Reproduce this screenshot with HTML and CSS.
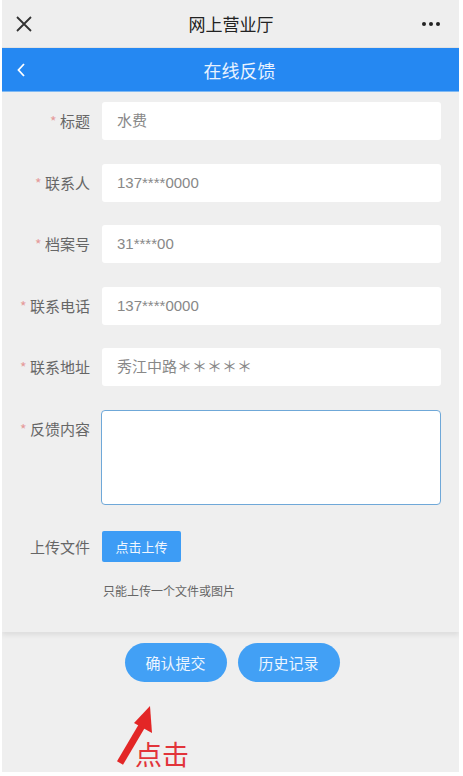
FILE: index.html
```html
<!DOCTYPE html>
<html lang="zh-CN">
<head>
    <meta charset="UTF-8">
    <meta name="viewport" content="width=device-width, initial-scale=1.0">
    <title>在线反馈</title>
    <link rel="stylesheet" href="styles.css">
</head>
<body>

<div class="phone">
    <div class="top-bar">
        <svg class="close-icon" width="18" height="18" viewBox="0 0 18 18">
            <path d="M2 2 L16 16 M16 2 L2 16" stroke="#333" stroke-width="1.8" fill="none"/>
        </svg>
        <span class="top-title">网上营业厅</span>
        <svg class="more-icon" width="20" height="6" viewBox="0 0 20 6">
            <circle cx="3" cy="3" r="2" fill="#222"/>
            <circle cx="10" cy="3" r="2" fill="#222"/>
            <circle cx="17" cy="3" r="2" fill="#222"/>
        </svg>
    </div>

    <div class="nav-bar">
        <svg class="back-icon" width="10" height="16" viewBox="0 0 10 16">
            <path d="M8 2 L2.5 8 L8 14" stroke="#fff" stroke-width="1.8" fill="none"/>
        </svg>
        <span class="nav-title">在线反馈</span>
    </div>

    <form class="feedback-form">
        <div class="form-row">
            <label><span class="star">*</span> 标题</label>
            <div class="field">水费</div>
        </div>
        <div class="form-row">
            <label><span class="star">*</span> 联系人</label>
            <div class="field">137****0000</div>
        </div>
        <div class="form-row">
            <label><span class="star">*</span> 档案号</label>
            <div class="field">31****00</div>
        </div>
        <div class="form-row">
            <label><span class="star">*</span> 联系电话</label>
            <div class="field">137****0000</div>
        </div>
        <div class="form-row">
            <label><span class="star">*</span> 联系地址</label>
            <div class="field">秀江中路＊＊＊＊＊</div>
        </div>
        <div class="form-row">
            <label><span class="star">*</span> 反馈内容</label>
            <div class="field field-area"></div>
        </div>
        <div class="form-row upload-row">
            <label>上传文件</label>
            <div class="upload-btn">点击上传</div>
        </div>
        <div class="hint">只能上传一个文件或图片</div>
    </form>

    <div class="actions">
        <div class="pill-btn">确认提交</div>
        <div class="pill-btn">历史记录</div>
    </div>

    <div class="callout">
        <svg class="arrow" width="44" height="62" viewBox="0 0 44 62">
            <path d="M6 58 L29 19" stroke="#e32626" stroke-width="7" fill="none"/>
            <polygon points="36,1 38,28 20,18" fill="#e32626"/>
        </svg>
        <span class="callout-text">点击</span>
    </div>
</div>

</body>
</html>
```

FILE: styles.css
```css
body {
    margin: 0;
    background: #fff;
    font-family: "Noto Sans CJK SC", "Noto Sans", sans-serif;
}
.phone {
    width: 457px;
    height: 772px;
    margin-left: 2px;
    background: #efefef;
    overflow: hidden;
}
.top-bar {
    height: 47px;
    display: flex;
    align-items: center;
    justify-content: space-between;
    padding: 0 18px 0 13px;
    background: #eeeeee;
    border-bottom: 1px solid #e2e2e2;
}
.top-title {
    font-size: 17px;
    color: #222;
    margin-left: 8px;
}
.nav-bar {
    height: 43px;
    background: #2588f2;
    display: flex;
    align-items: center;
    position: relative;
    padding-left: 14px;
    border-bottom: 1px solid #7fb9f3;
}
.nav-title {
    position: absolute;
    left: 0;
    right: 0;
    text-align: center;
    font-size: 18px;
    color: #e8f2ff;
    padding-left: 18px;
}
.feedback-form {
    padding: 10px 18px 33px 0;
    background: #efefef;
    box-shadow: 0 3px 5px rgba(0, 0, 0, 0.08);
}
.form-row {
    display: flex;
    align-items: flex-start;
    margin-bottom: 23.5px;
}
.form-row label {
    width: 88px;
    flex-shrink: 0;
    text-align: right;
    font-size: 15px;
    color: #666;
    line-height: 38px;
    margin-right: 12px;
}
.star {
    color: #e59a9a;
    font-size: 14px;
}
.field {
    flex: 1;
    height: 38px;
    line-height: 38px;
    background: #fff;
    border-radius: 3px;
    padding-left: 15px;
    font-size: 15px;
    color: #888;
    font-family: "Liberation Sans", "Noto Sans CJK SC", sans-serif;
}
.field-area {
    height: 93px;
    border: 1px solid #6fa8d8;
    border-radius: 4px;
    margin-left: -1px;
}
.upload-row {
    margin-top: 26px;
    margin-bottom: 20px;
}
.upload-row label {
    line-height: 31px;
}
.upload-btn {
    width: 79px;
    height: 31px;
    line-height: 31px;
    text-align: center;
    background: #3d9cf5;
    color: #f0f7ff;
    font-size: 13px;
    border-radius: 2px;
}
.hint {
    padding-left: 101px;
    font-size: 12px;
    color: #666;
}
.actions {
    display: flex;
    justify-content: center;
    gap: 11px;
    padding: 11px 0 0 3px;
}
.pill-btn {
    width: 102px;
    height: 39px;
    line-height: 39px;
    border-radius: 20px;
    background: #42a0f5;
    color: #eef6ff;
    font-size: 15px;
    text-align: center;
}
.callout {
    display: flex;
    align-items: flex-end;
    padding-left: 112px;
    margin-top: 23px;
}
.arrow {
    display: block;
}
.callout-text {
    font-size: 27px;
    color: #e2343a;
    margin-left: -23px;
    line-height: 30px;
    margin-bottom: -2px;
}
```
